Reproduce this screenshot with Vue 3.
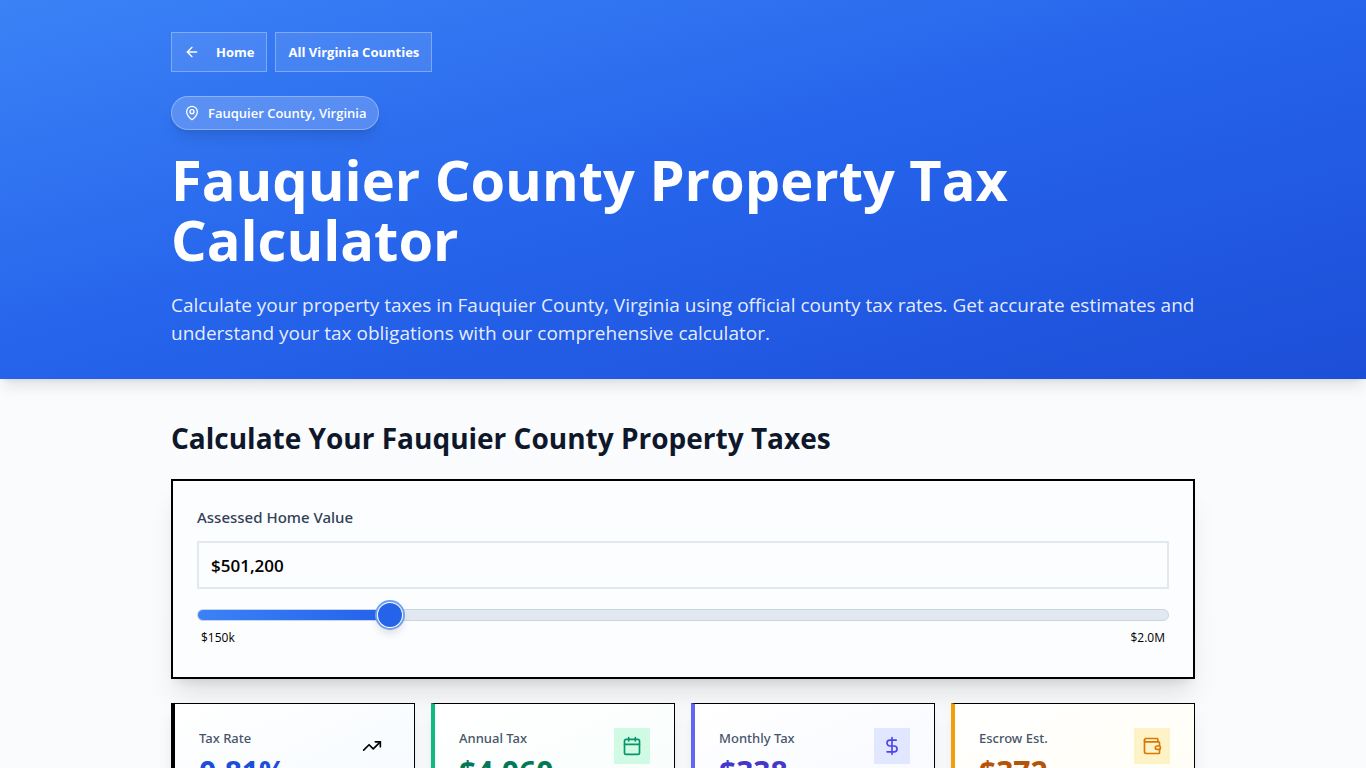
<script setup>
import { ref, computed } from 'vue'

const MIN = 150000
const MAX = 2000000
const TAX_RATE = 0.0081

const homeValue = ref(501200)

const fill = computed(() => ((homeValue.value - MIN) / (MAX - MIN)) * 100 + '%')
const formatted = computed(() => '$' + homeValue.value.toLocaleString('en-US'))
const annual = computed(() => Math.round((homeValue.value * TAX_RATE) / 10) * 10)
const money = (n) => '$' + Math.floor(n).toLocaleString('en-US')

const stats = computed(() => [
  { key: 'rate', label: 'Tax Rate', value: '0.81%' },
  { key: 'annual', label: 'Annual Tax', value: money(annual.value) },
  { key: 'monthly', label: 'Monthly Tax', value: money(annual.value / 12) },
  { key: 'escrow', label: 'Escrow Est.', value: money((annual.value / 12) * 1.1) }
])

function onText(e) {
  const n = Number(e.target.value.replace(/[^0-9]/g, ''))
  homeValue.value = Math.min(MAX, Math.max(MIN, n || MIN))
}
</script>

<template>
  <div class="page">
    <header class="hero">
      <div class="wrap">
        <nav class="nav">
          <a class="nav-link" href="#home">
            <svg class="icon arrow" viewBox="0 0 24 24"><path d="m12 19-7-7 7-7" /><path d="M19 12H5" /></svg>
            Home
          </a>
          <a class="nav-link" href="#counties">All Virginia Counties</a>
        </nav>
        <div class="pill">
          <svg class="icon" viewBox="0 0 24 24">
            <path d="M20 10c0 4.993-5.539 10.193-7.399 11.799a1 1 0 0 1-1.202 0C9.539 20.193 4 14.993 4 10a8 8 0 0 1 16 0" />
            <circle cx="12" cy="10" r="3" />
          </svg>
          Fauquier County, Virginia
        </div>
        <h1>Fauquier County Property Tax Calculator</h1>
        <p class="lead">
          Calculate your property taxes in Fauquier County, Virginia using official county tax rates. Get accurate
          estimates and understand your tax obligations with our comprehensive calculator.
        </p>
      </div>
    </header>

    <main class="wrap main">
      <h2>Calculate Your Fauquier County Property Taxes</h2>

      <section class="panel">
        <label for="home-value">Assessed Home Value</label>
        <input id="home-value" class="amount" type="text" inputmode="numeric" :value="formatted" @change="onText" />
        <input
          v-model.number="homeValue"
          class="slider"
          type="range"
          aria-label="Assessed home value slider"
          :min="MIN"
          :max="MAX"
          step="100"
          :style="{ '--fill': fill }"
        />
        <div class="scale"><span>$150k</span><span>$2.0M</span></div>
      </section>

      <section class="stats">
        <article v-for="s in stats" :key="s.key" class="stat" :class="s.key">
          <div>
            <p class="stat-label">{{ s.label }}</p>
            <p class="stat-value">{{ s.value }}</p>
          </div>
          <div class="stat-icon">
            <svg v-if="s.key === 'rate'" viewBox="0 0 24 24"><path d="M16 7h6v6" /><path d="m22 7-8.500 8.500-5-5L2 17" /></svg>
            <svg v-else-if="s.key === 'annual'" viewBox="0 0 24 24">
              <path d="M8 2v4" /><path d="M16 2v4" /><rect width="18" height="18" x="3" y="4" rx="2" /><path d="M3 10h18" />
            </svg>
            <svg v-else-if="s.key === 'monthly'" viewBox="0 0 24 24">
              <path d="M12 2v20" /><path d="M17 5H9.500a3.500 3.500 0 0 0 0 7h5a3.500 3.500 0 0 1 0 7H6" />
            </svg>
            <svg v-else viewBox="0 0 24 24">
              <path d="M19 7V4a1 1 0 0 0-1-1H5a2 2 0 0 0 0 4h15a1 1 0 0 1 1 1v4h-3a2 2 0 0 0 0 4h3a1 1 0 0 0 1-1v-2a1 1 0 0 0-1-1" />
              <path d="M3 5v14a2 2 0 0 0 2 2h15a1 1 0 0 0 1-1v-4" />
            </svg>
          </div>
        </article>
      </section>
    </main>
  </div>
</template>

<style>
body {
  margin: 0;
  background: #f8fafc;
}
</style>

<style scoped>
.page {
  min-height: 100vh;
  font-family: "Segoe UI", "Open Sans", "Noto Sans", sans-serif;
  color: #000;
  background: linear-gradient(#fbfdff, #f8fafc);
}
.page * {
  box-sizing: border-box;
}
.wrap {
  max-width: 1072px;
  margin: 0 auto;
  padding: 32px 24px;
}
svg {
  fill: none;
  stroke: currentColor;
  stroke-width: 2;
  stroke-linecap: round;
  stroke-linejoin: round;
}
.hero {
  position: relative;
  color: #fff;
  background: linear-gradient(165deg, #3b82f6, #2563eb 50%, #1d4ed8);
  box-shadow: 0 10px 15px -3px rgba(0, 0, 0, 0.1), 0 4px 6px -4px rgba(0, 0, 0, 0.1);
}
.nav {
  display: flex;
  gap: 8px;
  margin-bottom: 24px;
}
.nav-link {
  display: inline-flex;
  align-items: center;
  gap: 8px;
  height: 40px;
  padding: 0 12px;
  border: 1px solid rgba(255, 255, 255, 0.3);
  background: rgba(255, 255, 255, 0.1);
  color: #fff;
  font-size: 13px;
  font-weight: 700;
  text-decoration: none;
}
.icon {
  width: 16px;
  height: 16px;
  flex: none;
}
.arrow {
  margin-right: 8px;
}
.pill {
  display: flex;
  width: fit-content;
  align-items: center;
  gap: 8px;
  height: 34px;
  padding: 0 12px;
  border: 1px solid rgba(255, 255, 255, 0.3);
  border-radius: 17px;
  background: rgba(255, 255, 255, 0.2);
  box-shadow: 0 10px 15px -3px rgba(0, 0, 0, 0.1), 0 4px 6px -4px rgba(0, 0, 0, 0.1);
  font-size: 13px;
  font-weight: 600;
}
h1 {
  margin: 19px 0 22px;
  font-size: 56px;
  font-weight: 700;
  line-height: 60px;
}
.lead {
  margin: 0;
  font-size: 19px;
  line-height: 28px;
  color: rgba(255, 255, 255, 0.9);
}
.main {
  padding-top: 40px;
}
h2 {
  margin: 0 0 22px;
  font-size: 28px;
  font-weight: 700;
  line-height: 38px;
  color: #0f172a;
}
.panel {
  display: flex;
  flex-direction: column;
  padding: 24px 24px 30px;
  border: 2px solid #000;
  background: #fbfdff;
  box-shadow: 0 20px 25px -5px rgba(0, 0, 0, 0.1), 0 8px 10px -6px rgba(0, 0, 0, 0.1);
}
.panel label {
  margin-bottom: 12px;
  font-family: "Segoe UI", "Noto Sans", "Open Sans", sans-serif;
  font-size: 15px;
  font-weight: 500;
  line-height: 24px;
  color: #334155;
}
.amount {
  width: 100%;
  height: 48px;
  padding: 0 12px;
  border: 2px solid #e2e8f0;
  border-radius: 0;
  background: transparent;
  color: #000;
  font-family: inherit;
  font-size: 17px;
  font-weight: 600;
}
.slider {
  appearance: none;
  width: 100%;
  height: 12px;
  margin: 20px 0 8px;
  border: 1px solid #cbd5e1;
  border-radius: 6px;
  background: linear-gradient(to right, #3b82f6, #2563eb) 0 0 / var(--fill) 100% no-repeat border-box, #e2e8f0;
}
.slider::-webkit-slider-thumb {
  appearance: none;
  width: 24px;
  height: 24px;
  border-radius: 50%;
  background: #2563eb;
  box-shadow: 0 0 0 1px #fff, 0 0 0 3px #6ea0ee, 0 6px 10px rgba(0, 0, 0, 0.15);
}
.scale {
  display: flex;
  justify-content: space-between;
  padding: 0 4px;
  font-size: 12px;
  line-height: 18px;
}
.stats {
  display: grid;
  grid-template-columns: repeat(4, 1fr);
  gap: 16px;
  margin-top: 24px;
}
.stat {
  display: flex;
  justify-content: space-between;
  align-items: flex-start;
  padding: 24px;
  border: 1px solid #000;
  border-left: 4px solid var(--edge);
  background: linear-gradient(to bottom right, #fff, var(--tint));
  box-shadow: 0 10px 15px -3px rgba(0, 0, 0, 0.1);
}
.stat-label {
  margin: 0 0 6px;
  font-family: "Segoe UI", "Noto Sans", "Open Sans", sans-serif;
  font-size: 13px;
  font-weight: 500;
  line-height: 20px;
  color: #475569;
}
.stat-value {
  margin: 0;
  font-size: 30px;
  font-weight: 700;
  line-height: 36px;
  color: var(--ink);
}
.stat-icon {
  display: flex;
  padding: 8px;
  background: var(--chip);
  color: var(--glyph);
}
.stat-icon svg {
  width: 20px;
  height: 20px;
}
.rate {
  --edge: #000;
  --tint: #f5faff;
  --ink: #1d4ed8;
  --chip: transparent;
  --glyph: #000;
}
.annual {
  --edge: #10b981;
  --tint: #f7fefb;
  --ink: #047857;
  --chip: #d1fae5;
  --glyph: #059669;
}
.monthly {
  --edge: #6366f1;
  --tint: #f7f9ff;
  --ink: #4338ca;
  --chip: #e0e7ff;
  --glyph: #4f46e5;
}
.escrow {
  --edge: #f59e0b;
  --tint: #fffdf3;
  --ink: #b45309;
  --chip: #fef3c7;
  --glyph: #d97706;
}
@media (max-width: 800px) {
  .stats {
    grid-template-columns: repeat(2, 1fr);
  }
}
</style>
